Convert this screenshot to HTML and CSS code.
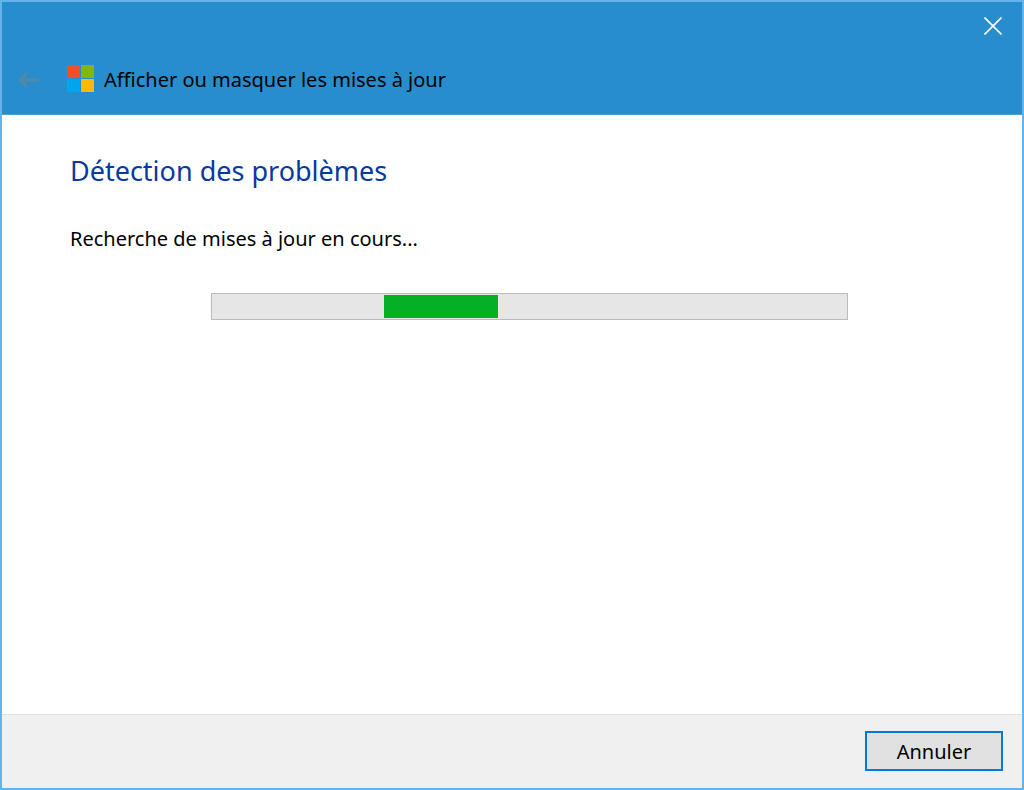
FILE: index.html
```html
<!DOCTYPE html>
<html lang="fr">
<head>
  <meta charset="UTF-8">
  <meta name="viewport" content="width=device-width, initial-scale=1.0">
  <title>Afficher ou masquer les mises à jour</title>
  <link rel="stylesheet" href="styles.css">
</head>
<body>
  <div class="window">
    <header class="titlebar">
      <div class="titlebar-controls">
        <button type="button" class="close" aria-label="Fermer">
          <svg width="18" height="18" viewBox="0 0 18 18">
            <path d="M0.5 0.5L17.5 17.5M17.5 0.5L0.5 17.5" fill="none" stroke="#fff" stroke-width="1.6"/>
          </svg>
        </button>
      </div>
      <div class="titlebar-main">
        <button type="button" class="back" aria-label="Précédent" disabled>
          <svg width="21" height="16" viewBox="0 0 21 16">
            <path d="M9.5 1L2.5 8L9.5 15M2.5 8H20.5" fill="none" stroke="#5488a8" stroke-width="3"/>
          </svg>
        </button>
        <svg class="logo" width="27" height="27" viewBox="0 0 27 27">
          <rect x="0" y="0" width="13" height="13" fill="#f25022"/>
          <rect x="14" y="0" width="13" height="13" fill="#7fba00"/>
          <rect x="0" y="14" width="13" height="13" fill="#00a4ef"/>
          <rect x="14" y="14" width="13" height="13" fill="#ffb900"/>
        </svg>
        <div class="title">Afficher ou masquer les mises à jour</div>
      </div>
    </header>
    <main class="content">
      <h1 class="heading">Détection des problèmes</h1>
      <p class="status" id="status">Recherche de mises à jour en cours...</p>
      <div class="progress" role="progressbar" aria-labelledby="status">
        <div class="progress-chunk"></div>
      </div>
    </main>
    <footer class="footer">
      <button type="button" class="button">Annuler</button>
    </footer>
  </div>
</body>
</html>
```

FILE: styles.css
```css
* {
  box-sizing: border-box;
}
body {
  margin: 0;
  font-family: "Noto Sans", "Open Sans", sans-serif;
  font-size: 20px;
  line-height: 28px;
  color: #000;
}
.window {
  display: flex;
  flex-direction: column;
  min-height: 100vh;
  border: 2px solid #63b4ec;
  background-color: #fff;
}
.titlebar {
  background-color: #288dcc;
  border-bottom: 1px solid #4a9fd6;
  padding-bottom: 20px;
}
.titlebar-controls {
  display: flex;
  justify-content: flex-end;
}
.close {
  display: flex;
  padding: 15px 20px;
  border: none;
  background: none;
}
.titlebar-main {
  display: flex;
  align-items: center;
  padding: 15px 16px 0;
}
.back {
  display: flex;
  padding: 0;
  border: none;
  background: none;
}
.logo {
  margin: 0 10px 2px 28px;
}
.content {
  flex: 1;
  padding: 36px 68px;
}
.heading {
  margin: 0;
  font-size: 27px;
  line-height: 40px;
  font-weight: normal;
  color: #063a9e;
}
.status {
  margin: 34px 0 40px;
}
.progress {
  height: 27px;
  margin: 0 12% 0 16%;
  padding: 1px 0;
  border: 1px solid #bcbcbc;
  background-color: #e6e6e6;
}
.progress-chunk {
  width: 18%;
  height: 100%;
  margin-left: 27%;
  background-color: #06b025;
}
.footer {
  display: flex;
  justify-content: flex-end;
  padding: 16px 19px 17px;
  border-top: 1px solid #dfdfdf;
  background-color: #f0f0f0;
}
.button {
  min-width: 138px;
  height: 40px;
  padding: 2px 16px 0;
  border: 2px solid #0078d7;
  background-color: #e1e1e1;
  font: inherit;
  color: #000;
}
```
